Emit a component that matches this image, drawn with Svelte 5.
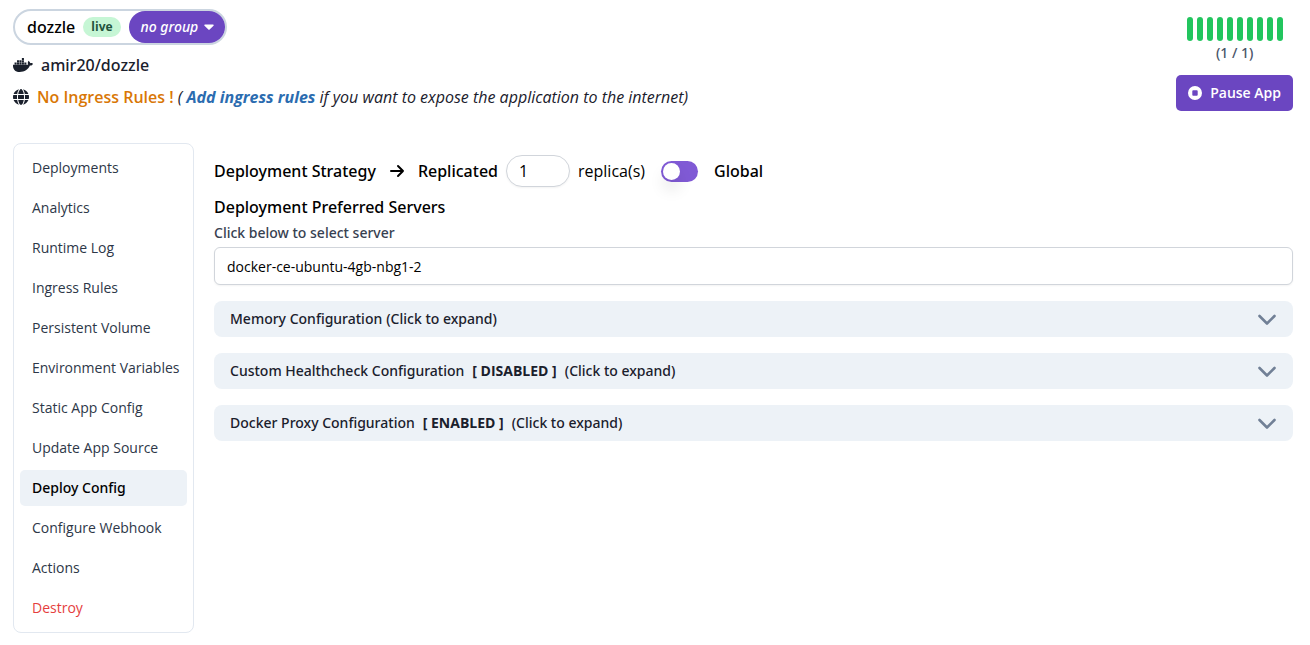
<script>
  const navItems = [
    'Deployments',
    'Analytics',
    'Runtime Log',
    'Ingress Rules',
    'Persistent Volume',
    'Environment Variables',
    'Static App Config',
    'Update App Source',
    'Deploy Config',
    'Configure Webhook',
    'Actions',
    'Destroy',
  ];
  const sections = [
    { title: 'Memory Configuration', status: '' },
    { title: 'Custom Healthcheck Configuration', status: 'DISABLED' },
    { title: 'Docker Proxy Configuration', status: 'ENABLED' },
  ];
  const bars = Array.from({ length: 10 });

  let current = $state('Deploy Config');
  let replicas = $state(1);
  let global = $state(false);
  let server = $state('docker-ce-ubuntu-4gb-nbg1-2');
</script>

<div class="page">
  <header>
    <div class="summary">
      <div class="pill">
        <h1 class="medium">dozzle</h1>
        <span class="status">live</span>
        <button class="group medium" type="button">
          no group
          <svg width="10" height="6" viewBox="0 0 10 6" aria-hidden="true">
            <path d="M1 .4h8c.7 0 1 .8.5 1.3L5.600 5.600a.8.8 0 0 1-1.200 0L.5 1.700C0 1.200.3.4 1 .4z" fill="currentColor" />
          </svg>
        </button>
      </div>
      <p class="line medium">
        <svg width="20" height="16" viewBox="0 0 640 512" aria-hidden="true">
          <path fill="currentColor" d="M349.9 236.3h-66.1v-59.4h66.1v59.4zm0-204.3h-66.1v60.7h66.1V32zm78.2 144.8H362v59.4h66.1v-59.4zm-156.3-72.1h-66.1v60.1h66.1v-60.1zm78.1 0h-66.1v60.1h66.1v-60.1zm276.8 100c-14.4-9.7-47.6-13.2-73.1-8.4-3.3-24-16.7-44.9-41.1-63.7l-14-9.3-9.3 14c-18.4 27.8-23.4 73.6-3.7 103.8-8.7 4.7-25.8 11.1-48.4 10.7H2.4c-8.7 50.8 5.8 116.8 44 162.1 37.1 43.9 92.7 66.2 165.4 66.2 157.4 0 273.9-72.5 328.4-204.2 21.4.4 67.6.1 91.3-45.2 1.5-2.5 6.6-13.2 8.5-17.1l-13.3-8.9zm-511.1-27.9h-66v59.4h66.1v-59.4zm78.1 0h-66.1v59.4h66.1v-59.4zm78.1 0h-66.1v59.4h66.1v-59.4zm-78.1-72.1h-66.1v60.1h66.1v-60.1z" />
        </svg>
        amir20/dozzle
      </p>
      <p class="line">
        <svg width="16" height="16" viewBox="0 0 512 512" aria-hidden="true">
          <path fill="currentColor" d="M352 256c0 22.2-1.2 43.6-3.3 64H163.3c-2.2-20.4-3.3-41.8-3.3-64s1.2-43.6 3.3-64H348.7c2.2 20.4 3.3 41.8 3.3 64zm28.8-64H503.9c5.3 20.5 8.1 41.9 8.1 64s-2.8 43.5-8.1 64H380.8c2.1-20.6 3.2-42 3.2-64s-1.1-43.4-3.2-64zm112.6-32H376.7c-10-63.9-29.8-117.4-55.3-151.6c78.3 20.7 142 77.5 171.9 151.6zm-149.1 0H167.7c6.1-36.4 15.5-68.6 27-94.7c10.5-23.6 22.2-40.7 33.5-51.5C239.4 3.2 248.7 0 256 0s16.6 3.2 27.8 13.8c11.3 10.8 23 27.9 33.5 51.5c11.6 26 20.9 58.2 27 94.7zm-209 0H18.6C48.6 85.9 112.2 29.1 190.6 8.4C165.1 42.6 145.3 96.1 135.3 160zM8.1 192H131.2c-2.1 20.6-3.2 42-3.2 64s1.1 43.4 3.2 64H8.1C2.8 299.5 0 278.1 0 256s2.8-43.5 8.1-64zM194.7 446.6c-11.6-26-20.9-58.2-27-94.6H344.3c-6.1 36.4-15.5 68.6-27 94.6c-10.5 23.6-22.2 40.7-33.5 51.5C272.6 508.8 263.3 512 256 512s-16.6-3.2-27.8-13.8c-11.3-10.8-23-27.9-33.5-51.5zM135.3 352c10 63.9 29.8 117.4 55.3 151.6C112.2 482.9 48.6 426.1 18.6 352H135.3zm358.1 0c-30 74.1-93.6 130.9-171.9 151.6c25.5-34.2 45.2-87.7 55.3-151.6H493.4z" />
        </svg>
        <span>
          <strong class="warning">No Ingress Rules !</strong>
          <i>( <a href="#ingress">Add ingress rules</a> if you want to expose the application to the internet)</i>
        </span>
      </p>
    </div>

    <div class="health">
      <div class="bars">
        {#each bars as _}<span></span>{/each}
      </div>
      <p class="count medium">(1 / 1)</p>
      <button class="pause" type="button">
        <svg width="14" height="14" viewBox="0 0 14 14" aria-hidden="true">
          <path fill="currentColor" fill-rule="evenodd" d="M7 0a7 7 0 1 1 0 14A7 7 0 0 1 7 0zM5.200 4.300a.9.9 0 0 0-.9.9v3.600a.9.9 0 0 0 .9.9h3.600a.9.9 0 0 0 .9-.9V5.200a.9.9 0 0 0-.9-.9z" />
        </svg>
        Pause App
      </button>
    </div>
  </header>

  <div class="body">
    <nav aria-label="Application">
      {#each navItems as item}
        <button
          type="button"
          class:active={item === current}
          class:medium={item === current}
          class:danger={item === 'Destroy'}
          onclick={() => (current = item)}>{item}</button>
      {/each}
    </nav>

    <main>
      <div class="strategy">
        <h2 class="medium">Deployment Strategy</h2>
        <svg class="arrow" width="16" height="16" viewBox="0 0 16 16" aria-hidden="true">
          <path d="M2 8h12M9 3l5 5-5 5" fill="none" stroke="currentColor" stroke-width="2" stroke-linecap="round" stroke-linejoin="round" />
        </svg>
        <label class="medium" for="replicas">Replicated</label>
        <input id="replicas" class="replicas" type="number" min="0" bind:value={replicas} />
        <span>replica(s)</span>
        <input id="global" class="switch" type="checkbox" role="switch" bind:checked={global} />
        <label class="medium" for="global">Global</label>
      </div>

      <h2 class="servers medium">Deployment Preferred Servers</h2>
      <label class="hint medium" for="server">Click below to select server</label>
      <input id="server" class="server" type="text" bind:value={server} />

      <div class="sections">
        {#each sections as section}
          <button type="button" class="section medium" aria-expanded="false">
            <span class="title">
              <span>{section.title}</span>
              {#if section.status}<b>[ {section.status} ]</b>{/if}
              <span>(Click to expand)</span>
            </span>
            <svg width="20" height="14" viewBox="0 0 20 14" aria-hidden="true">
              <path d="M2.500 4l7.500 7.500 7.500-7.500" fill="none" stroke="currentColor" stroke-width="2.600" stroke-linecap="round" stroke-linejoin="round" />
            </svg>
          </button>
        {/each}
      </div>
    </main>
  </div>
</div>

<style>
  :global(body) {
    margin: 0;
    background: #fff;
  }

  .page {
    padding: 9px 17px 12px 13px;
    font-family: 'Open Sans', 'Noto Sans', sans-serif;
    font-size: 16px;
    line-height: 24px;
    color: #000;
  }

  .page * {
    box-sizing: border-box;
  }

  h1,
  h2,
  p {
    margin: 0;
    font-size: 16px;
  }

  button,
  input {
    margin: 0;
    font: inherit;
    color: inherit;
  }

  /* Noto Sans ships a true medium weight, Open Sans does not. */
  .medium {
    font-family: 'Noto Sans', 'Open Sans', sans-serif;
    font-weight: 500;
  }

  button {
    border: 0;
    background: none;
    cursor: pointer;
  }

  svg {
    flex: none;
    display: block;
  }

  header,
  .body {
    display: flex;
    align-items: flex-start;
  }

  header {
    justify-content: space-between;
    gap: 20px;
  }

  .summary {
    display: flex;
    flex-direction: column;
    align-items: flex-start;
    gap: 8px;
  }

  .pill {
    display: flex;
    align-items: center;
    gap: 8px;
    height: 36px;
    padding-left: 12px;
    border: 2px solid #cbd5e0;
    border-radius: 18px;
  }

  .status {
    padding: 0 8px;
    border-radius: 10px;
    background: #c6f6d5;
    color: #22543d;
    font-size: 12px;
    font-weight: 700;
    line-height: 20px;
  }

  .group {
    display: flex;
    align-items: center;
    gap: 6px;
    height: 32px;
    padding: 0 11px 0 12px;
    border-radius: 16px;
    background: #6b46c1;
    color: #fff;
    font-size: 14px;
    font-style: italic;
  }

  .line {
    display: flex;
    align-items: center;
    gap: 8px;
    color: #1a202c;
  }

  .warning {
    color: #d97706;
    font-weight: 600;
  }

  a {
    color: #2b6cb0;
    font-weight: 700;
    text-decoration: none;
  }

  .health {
    display: flex;
    flex-direction: column;
    align-items: center;
    padding-top: 8px;
  }

  .bars {
    display: flex;
    gap: 4px;
  }

  .bars span {
    width: 6px;
    height: 24px;
    border-radius: 3px;
    background: #22c55e;
  }

  .count {
    margin-bottom: 10px;
    color: #4a5568;
    font-size: 14px;
  }

  .pause {
    display: flex;
    align-items: center;
    gap: 8px;
    height: 36px;
    padding: 0 12px;
    border-radius: 5px;
    background: #6b46c1;
    color: #fff;
    font-size: 14px;
    font-weight: 600;
    white-space: nowrap;
  }

  .body {
    gap: 20px;
    margin-top: 32px;
  }

  nav {
    flex: none;
    display: flex;
    flex-direction: column;
    gap: 4px;
    width: 181px;
    padding: 6px;
    border: 1px solid #e2e8f0;
    border-radius: 8px;
  }

  nav button {
    height: 36px;
    padding: 0 12px;
    border-radius: 5px;
    color: #2d3748;
    font-size: 14px;
    text-align: left;
    white-space: nowrap;
  }

  nav .active {
    background: #edf2f7;
    color: #000;
  }

  nav .danger {
    color: #e53e3e;
  }

  main {
    flex: 1;
    min-width: 0;
    padding-top: 12px;
  }

  .strategy {
    display: flex;
    align-items: center;
    gap: 8px;
  }

  .arrow {
    margin: 0 5px;
  }

  .replicas {
    width: 64px;
    height: 32px;
    padding: 0 12px;
    border: 1px solid #d1d5db;
    border-radius: 16px;
    background: #fff;
    box-shadow: 0 1px 2px rgba(0, 0, 0, 0.05);
  }

  .switch {
    appearance: none;
    display: flex;
    align-items: center;
    width: 37px;
    height: 21px;
    margin: 0 8px;
    padding: 2px;
    border-radius: 11px;
    background: #805ad5;
    cursor: pointer;
  }

  .switch::before {
    content: '';
    width: 17px;
    height: 17px;
    border-radius: 50%;
    background: #fff;
    box-shadow: 0 10px 15px rgba(0, 0, 0, 0.1);
  }

  .switch:checked {
    justify-content: flex-end;
  }

  .servers {
    margin-top: 8px;
  }

  .hint {
    display: block;
    margin: 4px 0;
    color: #374151;
    font-size: 14px;
    line-height: 20px;
  }

  .server {
    display: block;
    width: 100%;
    height: 38px;
    padding: 0 12px;
    border: 1px solid #d1d5db;
    border-radius: 6px;
    background: #fff;
    box-shadow: 0 1px 2px rgba(0, 0, 0, 0.05);
    font-size: 14px;
  }

  .sections {
    display: flex;
    flex-direction: column;
    gap: 16px;
    margin-top: 16px;
  }

  .section {
    display: flex;
    align-items: center;
    justify-content: space-between;
    height: 36px;
    padding: 0 16px;
    border-radius: 8px;
    background: #edf2f7;
    color: #1a202c;
    font-size: 14px;
  }

  .section svg {
    color: #718096;
  }

  .title {
    display: flex;
    gap: 4px;
  }

  .title b {
    margin: 0 4px;
    font-family: 'Open Sans', 'Noto Sans', sans-serif;
    font-weight: 700;
  }
</style>
